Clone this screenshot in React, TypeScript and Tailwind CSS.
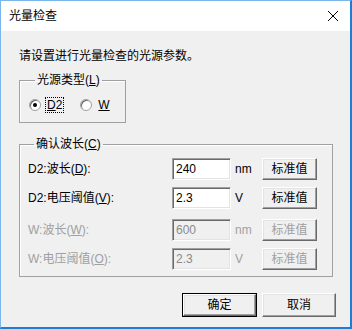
import React from "react";

const font = {
  fontFamily: '"Liberation Sans", "Noto Sans CJK SC", sans-serif',
};

function Radio({ checked }: { checked?: boolean }) {
  return (
    <span className="relative flex h-[12px] w-[12px] items-center justify-center rounded-full border border-[#a0a0a0] bg-white shadow-[inset_1px_1px_0_#696969]">
      {checked && <span className="h-[4px] w-[4px] rounded-full bg-black" />}
    </span>
  );
}

function Field({ value, disabled }: { value: string; disabled?: boolean }) {
  return (
    <div
      className={`flex h-[22px] w-[59px] items-center border border-t-[#a0a0a0] border-l-[#a0a0a0] border-b-white border-r-white pl-[3px] text-[12px] shadow-[inset_1px_1px_0_#696969,inset_-1px_-1px_0_#e3e3e3] ${
        disabled ? "bg-[#f0f0f0] text-[#8a8a8a]" : "bg-white text-black"
      }`}
    >
      {value}
    </div>
  );
}

function Btn({
  label,
  w,
  h,
  disabled,
  isDefault,
}: {
  label: string;
  w: string;
  h: string;
  disabled?: boolean;
  isDefault?: boolean;
}) {
  const inner = (
    <div
      className={`flex h-full w-full items-center justify-center border border-t-white border-l-white border-b-[#696969] border-r-[#696969] bg-[#f0f0f0] text-[12px] shadow-[inset_-1px_-1px_0_#a0a0a0,inset_1px_1px_0_#e3e3e3] ${
        disabled ? "text-[#a0a0a0]" : "text-black"
      }`}
    >
      {label}
    </div>
  );
  return (
    <div className={`${w} ${h} ${isDefault ? "border border-black" : ""}`}>{inner}</div>
  );
}

const rows = [
  { label: "D2:波长(", key: "D", end: "):", value: "240", unit: "nm", disabled: false, mt: "mt-[7px]" },
  { label: "D2:电压阈值(", key: "V", end: "):", value: "2.3", unit: "V", disabled: false, mt: "mt-[7px]" },
  { label: "W:波长(", key: "W", end: "):", value: "600", unit: "nm", disabled: true, mt: "mt-[10px]" },
  { label: "W:电压阈值(", key: "O", end: "):", value: "2.3", unit: "V", disabled: true, mt: "mt-[7px]" },
];

export default function App() {
  return (
    <div
      className="flex h-[329px] w-[352px] flex-col border-t border-l border-r-2 border-b-2 border-t-[#7ab6ec] border-l-[#7ab6ec] border-r-[#1a7fd6] border-b-[#1a7fd6] bg-[#f0f0f0] text-black"
      style={font}
    >
      <div className="flex h-[30px] items-center justify-between bg-white pl-[8px] pr-[10px]">
        <span className="text-[12px]">光量检查</span>
        <svg width="12" height="12" viewBox="0 0 12 12" className="mr-[1px]">
          <path d="M1 1L11 11M11 1L1 11" stroke="#000" strokeWidth="1" />
        </svg>
      </div>

      <div className="flex flex-1 flex-col pl-[18px] pt-[17px]">
        <p className="text-[12px] leading-[16px]">请设置进行光量检查的光源参数。</p>

        <fieldset className="mt-[9px] w-[107px] border border-[#a0a0a0] px-[9px] pb-[9px] pt-[10px] shadow-[inset_1px_1px_0_#fff]">
          <legend className="ml-[6px] px-[2px] text-[12px] leading-[14px]">
            光源类型(<u>L</u>)
          </legend>
          <div className="flex items-center text-[12px] leading-[14px]">
            <Radio checked />
            <span className="ml-[4px] border border-dotted border-black px-[1px]">
              <u>D</u>2
            </span>
            <span className="ml-[16px]">
              <Radio />
            </span>
            <span className="ml-[6px]">
              <u>W</u>
            </span>
          </div>
        </fieldset>

        <fieldset className="mt-[14px] w-[314px] border border-[#a0a0a0] pb-[6px] pl-[8px] pt-[7px] shadow-[inset_1px_1px_0_#fff]">
          <legend className="ml-[6px] px-[2px] text-[12px] leading-[14px]">
            确认波长(<u>C</u>)
          </legend>
          {rows.map((r, i) => (
            <div key={i} className={`flex items-center ${i === 0 ? "" : r.mt}`}>
              <span
                className={`w-[144px] text-[12px] ${r.disabled ? "text-[#a0a0a0]" : "text-black"}`}
              >
                {r.label}
                <u>{r.key}</u>
                {r.end}
              </span>
              <Field value={r.value} disabled={r.disabled} />
              <span
                className={`ml-[4px] w-[27px] text-[12px] ${r.disabled ? "text-[#a0a0a0]" : "text-black"}`}
              >
                {r.unit}
              </span>
              <Btn label="标准值" w="w-[55px]" h="h-[22px]" disabled={r.disabled} />
            </div>
          ))}
        </fieldset>

        <div className="mt-[16px] flex gap-[5px] self-end pr-[14px]">
          <Btn label="确定" w="w-[75px]" h="h-[24px]" isDefault />
          <Btn label="取消" w="w-[74px]" h="h-[24px]" />
        </div>
      </div>
    </div>
  );
}
